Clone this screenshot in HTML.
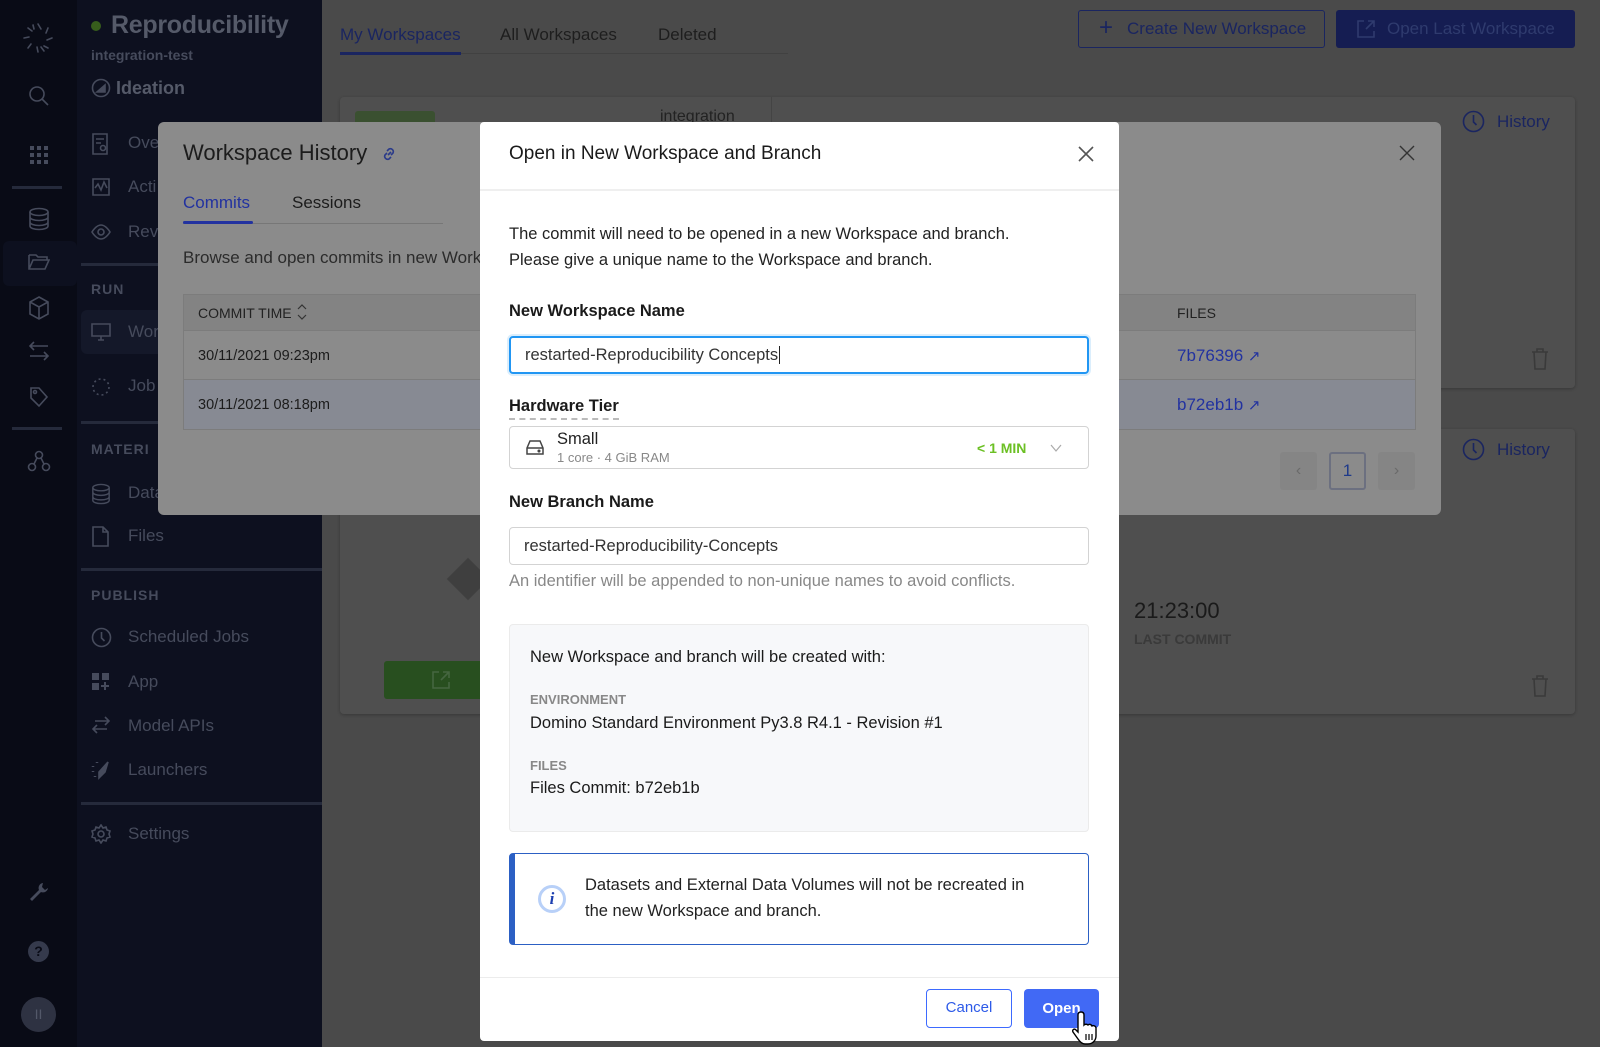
<!DOCTYPE html>
<html><head><meta charset="utf-8"><style>
*{box-sizing:border-box;margin:0;padding:0}
body{width:1600px;height:1047px;overflow:hidden;background:#4a4a4a;font-family:"Liberation Sans",Arial,sans-serif;position:relative;color:#222}
.a{position:absolute;white-space:nowrap}
.rail{position:absolute;left:0;top:0;width:77px;height:1047px;background:#090b16}
.side{position:absolute;left:77px;top:0;width:245px;height:1047px;background:#0d101f}
.si{color:#464b5c;font-size:17px}
.sh{color:#464b5c;font-size:14px;font-weight:bold;letter-spacing:1px}
.div{position:absolute;height:3px;background:#252a3b}
.ic{position:absolute;stroke:#464b5c;fill:none;stroke-width:1.6}
.card{position:absolute;background:#4f4f4f;border-radius:4px;box-shadow:0 1px 3px rgba(0,0,0,.25)}
.hist{position:absolute;left:158px;top:122px;width:1283px;height:393px;background:#8b8b8b;border-radius:6px}
.m{position:absolute;left:480px;top:122px;width:639px;height:919px;background:#fff;border-radius:4px}
.lbl{font-size:16.5px;font-weight:bold;color:#1a1a1a}
.inp{position:absolute;left:29px;width:580px;height:38px;border:1px solid #d3d3d3;border-radius:4px;font-size:16.5px;padding:0 14px;line-height:36px;color:#333}
</style></head><body>

<div class="rail"></div>
<svg class="ic" style="left:20px;top:20px" width="36" height="36" viewBox="0 0 36 36" stroke-width="2.2" stroke="#6c7180"><g stroke-linecap="round"><path d="M18 4l3 5"/><path d="M28 8l-2 5"/><path d="M32 18l-5 2"/><path d="M28 28l-4-2"/><path d="M18 32l-1-5"/><path d="M8 28l3-4"/><path d="M4 18l5-1"/><path d="M8 8l4 3"/><path d="M13 5l1 4"/><path d="M24 31l-3-4"/></g></svg>
<svg class="ic" style="left:27px;top:84px" width="24" height="24" viewBox="0 0 24 24" stroke-width="2.2"><circle cx="10" cy="10" r="7"/><path d="M15 15l6 6"/></svg>
<svg class="ic" style="left:30px;top:146px;fill:#464b5c;stroke:none" width="18" height="18" viewBox="0 0 18 18"><g><rect x="0" y="0" width="4" height="4"/><rect x="7" y="0" width="4" height="4"/><rect x="14" y="0" width="4" height="4"/><rect x="0" y="7" width="4" height="4"/><rect x="7" y="7" width="4" height="4"/><rect x="14" y="7" width="4" height="4"/><rect x="0" y="14" width="4" height="4"/><rect x="7" y="14" width="4" height="4"/><rect x="14" y="14" width="4" height="4"/></g></svg>
<div class="div" style="left:12px;top:186px;width:50px"></div>
<svg class="ic" style="left:28px;top:207px" width="22" height="24" viewBox="0 0 22 24"><ellipse cx="11" cy="5" rx="9" ry="3.5"/><path d="M2 5v14c0 2 4 3.5 9 3.5s9-1.5 9-3.5V5M2 10c0 2 4 3.5 9 3.5s9-1.5 9-3.5M2 15c0 2 4 3.5 9 3.5s9-1.5 9-3.5"/></svg>
<div class="a" style="left:3px;top:241px;width:74px;height:45px;background:#0d101f;border-radius:6px"></div>
<svg class="ic" style="left:28px;top:253px" width="22" height="18" viewBox="0 0 22 18"><path d="M1 2h7l2 2h9v3M1 2v14h16l4-9H5L1 16"/></svg>
<svg class="ic" style="left:28px;top:296px" width="22" height="24" viewBox="0 0 22 24"><path d="M11 1l9 5v12l-9 5-9-5V6zM2 6l9 5 9-5M11 11v12"/></svg>
<svg class="ic" style="left:28px;top:340px" width="22" height="22" viewBox="0 0 22 22"><path d="M6 2L2 6l4 4M2 6h18M16 12l4 4-4 4M20 16H2"/></svg>
<svg class="ic" style="left:29px;top:386px" width="20" height="22" viewBox="0 0 20 22"><path d="M2 2h8l8 9-8 9-8-8z"/><circle cx="6" cy="6" r="1.5"/></svg>
<div class="div" style="left:12px;top:427px;width:50px"></div>
<svg class="ic" style="left:27px;top:449px" width="24" height="24" viewBox="0 0 24 24"><circle cx="12" cy="6" r="3.5"/><circle cx="5" cy="18" r="3.5"/><circle cx="19" cy="18" r="3.5"/><path d="M10 9l-3 6M14 9l3 6"/></svg>
<svg class="ic" style="left:29px;top:882px;fill:#464b5c;stroke:none" width="20" height="20" viewBox="0 0 20 20"><path d="M14 1a5 5 0 0 0-4 7L1 17l2 2 9-9a5 5 0 0 0 7-4l-3 2-3-3z"/></svg>
<div class="a" style="left:28px;top:941px;width:21px;height:21px;border-radius:50%;background:#353a4c;color:#090b16;font-size:14px;font-weight:bold;text-align:center;line-height:21px">?</div>
<div class="a" style="left:21px;top:997px;width:35px;height:35px;border-radius:50%;background:#2e3242;color:#535869;font-size:14px;text-align:center;line-height:35px">II</div>

<div class="side"></div>
<div class="a" style="left:91px;top:21px;width:10px;height:10px;border-radius:50%;background:#375e1c"></div>
<div class="a" style="left:111px;top:11px;font-size:25px;font-weight:bold;color:#555a69;letter-spacing:-.3px">Reproducibility</div>
<div class="a" style="left:91px;top:47px;font-size:14px;font-weight:bold;color:#464b5c">integration-test</div>
<svg class="ic" style="left:91px;top:78px" width="20" height="20" viewBox="0 0 20 20"><circle cx="10" cy="10" r="8.5"/><path d="M6 14h8V7z" fill="#464b5c"/></svg>
<div class="a" style="left:116px;top:78px;font-size:18px;font-weight:bold;color:#555a69">Ideation</div>
<svg class="ic" style="left:92px;top:133px" width="18" height="22" viewBox="0 0 18 22"><path d="M1 1h14v20H1zM4 6h8M4 10h5"/><circle cx="11" cy="15" r="2.5"/></svg>
<div class="a si" style="left:128px;top:133px">Ove</div>
<svg class="ic" style="left:92px;top:178px" width="18" height="18" viewBox="0 0 18 18"><path d="M1 1h16v16H1zM3 10l3-4 3 6 3-8 3 6"/></svg>
<div class="a si" style="left:128px;top:177px">Acti</div>
<svg class="ic" style="left:91px;top:224px" width="20" height="16" viewBox="0 0 20 16"><path d="M1 8s4-7 9-7 9 7 9 7-4 7-9 7-9-7-9-7z"/><circle cx="10" cy="8" r="3"/></svg>
<div class="a si" style="left:128px;top:222px">Rev</div>
<div class="div" style="left:81px;top:263px;width:241px"></div>
<div class="a sh" style="left:91px;top:281px">RUN</div>
<div class="a" style="left:81px;top:310px;width:241px;height:44px;background:#141829;border-radius:6px"></div>
<svg class="ic" style="left:91px;top:323px" width="20" height="18" viewBox="0 0 20 18"><path d="M1 1h18v12H1zM7 17h6M10 13v4"/></svg>
<div class="a si" style="left:128px;top:322px">Wor</div>
<svg class="ic" style="left:91px;top:377px;stroke-dasharray:2 3" width="20" height="20" viewBox="0 0 20 20"><circle cx="10" cy="10" r="8"/></svg>
<div class="a si" style="left:128px;top:376px">Job</div>
<div class="div" style="left:81px;top:421px;width:241px"></div>
<div class="a sh" style="left:91px;top:441px">MATERI</div>
<svg class="ic" style="left:91px;top:483px" width="20" height="22" viewBox="0 0 22 24"><ellipse cx="11" cy="5" rx="9" ry="3.5"/><path d="M2 5v14c0 2 4 3.5 9 3.5s9-1.5 9-3.5V5M2 10c0 2 4 3.5 9 3.5s9-1.5 9-3.5M2 15c0 2 4 3.5 9 3.5s9-1.5 9-3.5"/></svg>
<div class="a si" style="left:128px;top:483px">Data</div>
<svg class="ic" style="left:92px;top:526px" width="17" height="21" viewBox="0 0 17 21"><path d="M1 1h10l5 5v14H1zM11 1v5h5"/></svg>
<div class="a si" style="left:128px;top:526px">Files</div>
<div class="div" style="left:81px;top:568px;width:241px"></div>
<div class="a sh" style="left:91px;top:587px">PUBLISH</div>
<svg class="ic" style="left:91px;top:627px" width="21" height="21" viewBox="0 0 21 21"><circle cx="10.5" cy="10.5" r="9"/><path d="M10.5 5v6l3 3"/></svg>
<div class="a si" style="left:128px;top:627px">Scheduled Jobs</div>
<svg class="ic" style="left:92px;top:673px;fill:#464b5c;stroke:none" width="18" height="18" viewBox="0 0 18 18"><rect x="0" y="0" width="7" height="7"/><rect x="10" y="0" width="7" height="7"/><rect x="0" y="10" width="7" height="7"/><path d="M13 9v8M9 13h8" stroke="#464b5c" stroke-width="2"/></svg>
<div class="a si" style="left:128px;top:672px">App</div>
<svg class="ic" style="left:92px;top:716px" width="18" height="18" viewBox="0 0 18 18"><path d="M13 1l4 4-4 4M17 5H3M5 9l-4 4 4 4M1 13h14"/></svg>
<div class="a si" style="left:128px;top:716px">Model APIs</div>
<svg class="ic" style="left:91px;top:760px" width="20" height="20" viewBox="0 0 20 20"><path d="M8 12l9-10-3 10-6 6z" fill="#464b5c"/><path d="M2 6v1M2 11v1M4 16v1M6 2v1" stroke-width="2.5"/></svg>
<div class="a si" style="left:128px;top:760px">Launchers</div>
<div class="div" style="left:81px;top:802px;width:241px"></div>
<svg class="ic" style="left:91px;top:824px" width="20" height="20" viewBox="0 0 20 20"><circle cx="10" cy="10" r="3"/><path d="M10 1l2 3 3-1 1 3 3 1-1 3 1 3-3 1-1 3-3-1-2 3-2-3-3 1-1-3-3-1 1-3-1-3 3-1 1-3 3 1z"/></svg>
<div class="a si" style="left:128px;top:824px">Settings</div>

<div class="a" style="left:340px;top:25px;font-size:17px;color:#1a2560">My Workspaces</div>
<div class="a" style="left:500px;top:25px;font-size:17px;color:#1e1e1e">All Workspaces</div>
<div class="a" style="left:658px;top:25px;font-size:17px;color:#1e1e1e">Deleted</div>
<div class="a" style="left:340px;top:53px;width:448px;height:1px;background:#414141"></div>
<div class="a" style="left:340px;top:52px;width:121px;height:3px;background:#1a2560"></div>
<div class="a" style="left:1078px;top:10px;width:247px;height:38px;border:1.5px solid #1a2560;border-radius:3px;color:#1a2560;font-size:17px;line-height:35px;padding-left:48px">Create New Workspace<span class="a" style="left:20px;top:-1px;font-size:24px">+</span></div>
<div class="a" style="left:1336px;top:10px;width:239px;height:38px;background:#151d52;border-radius:3px;color:#2f3b6e;font-size:17px;line-height:38px;padding-left:51px">Open Last Workspace</div>
<svg class="ic" style="left:1356px;top:19px;stroke:#2f3b6e" width="20" height="20" viewBox="0 0 20 20"><path d="M8 2H2v16h16v-6M12 2h6v6M18 2l-8 8"/></svg>

<div class="card" style="left:340px;top:97px;width:1235px;height:291px"></div>
<div class="a" style="left:355px;top:111px;width:80px;height:24px;background:#3a5030;border-radius:3px"></div>
<div class="a" style="left:771px;top:97px;width:1px;height:40px;background:#444"></div>
<div class="a" style="left:660px;top:108px;font-size:16px;color:#222">integration</div>
<div class="a" style="left:1497px;top:112px;font-size:17px;color:#1a2560">History</div>
<svg class="ic" style="left:1462px;top:110px;stroke:#1a2560" width="23" height="23" viewBox="0 0 23 23"><circle cx="11.5" cy="11.5" r="10"/><path d="M11.5 5v7l3 3"/></svg>
<svg class="ic" style="left:1531px;top:348px;stroke:#3a3a3a" width="18" height="22" viewBox="0 0 18 22"><path d="M1 4h16M6 4V1h6v3M3 4l1 17h10l1-17"/></svg>

<div class="card" style="left:340px;top:429px;width:1235px;height:285px"></div>
<div class="a" style="left:1497px;top:440px;font-size:17px;color:#1a2560">History</div>
<svg class="ic" style="left:1462px;top:438px;stroke:#1a2560" width="23" height="23" viewBox="0 0 23 23"><circle cx="11.5" cy="11.5" r="10"/><path d="M11.5 5v7l3 3"/></svg>
<div class="a" style="left:384px;top:661px;width:110px;height:38px;background:#284f1f;border-radius:3px"></div>
<svg class="ic" style="left:431px;top:670px;stroke:#456640" width="20" height="20" viewBox="0 0 20 20"><path d="M8 2H2v16h16v-6M12 2h6v6M18 2l-8 8"/></svg>
<div class="a" style="left:453px;top:564px;width:30px;height:30px;background:#3f3f3f;transform:rotate(45deg)"></div>
<div class="a" style="left:1134px;top:598px;font-size:22px;color:#1a1a1a">21:23:00</div>
<div class="a" style="left:1134px;top:631px;font-size:14px;font-weight:bold;color:#3a3a3a">LAST COMMIT</div>
<svg class="ic" style="left:1531px;top:675px;stroke:#3a3a3a" width="18" height="22" viewBox="0 0 18 22"><path d="M1 4h16M6 4V1h6v3M3 4l1 17h10l1-17"/></svg>

<div class="hist">
  <div class="a" style="left:25px;top:18px;font-size:22px;color:#1c1c1c">Workspace History</div>
  <svg class="a" style="left:223px;top:24px" width="16" height="16" viewBox="0 0 16 16" fill="none" stroke="#2a3a8a" stroke-width="1.6"><path d="M7 9l3-3M6 5l2-2a3 3 0 0 1 4 4l-2 2M10 11l-2 2a3 3 0 0 1-4-4l2-2"/></svg>
  <div class="a" style="left:25px;top:71px;font-size:17px;color:#2232a0">Commits</div>
  <div class="a" style="left:134px;top:71px;font-size:17px;color:#1c1c1c">Sessions</div>
  <div class="a" style="left:25px;top:101px;width:260px;height:1px;background:#777"></div>
  <div class="a" style="left:25px;top:99px;width:70px;height:3px;background:#2232a0;border-radius:2px"></div>
  <div class="a" style="left:25px;top:126px;font-size:17px;color:#2b2b2b">Browse and open commits in new Workspaces</div>
  <div class="a" style="left:25px;top:172px;width:1233px;height:37px;background:#838383;border:1px solid #7c7c7c"></div>
  <div class="a" style="left:40px;top:183px;font-size:14px;color:#222">COMMIT TIME</div>
  <svg class="a" style="left:139px;top:181px" width="10" height="18" viewBox="0 0 10 18" fill="none" stroke="#333" stroke-width="1.2"><path d="M1 6l4-4 4 4M1 12l4 4 4-4"/></svg>
  <div class="a" style="left:1019px;top:183px;font-size:14px;color:#222">FILES</div>
  <div class="a" style="left:25px;top:209px;width:1233px;height:49px;background:#8b8b8b;border:1px solid #7c7c7c;border-top:none"></div>
  <div class="a" style="left:25px;top:258px;width:1233px;height:50px;background:#878a93;border:1px solid #7c7c7c;border-top:none"></div>
  <div class="a" style="left:40px;top:226px;font-size:14.5px;color:#1c1c1c">30/11/2021 09:23pm</div>
  <div class="a" style="left:40px;top:275px;font-size:14.5px;color:#1c1c1c">30/11/2021 08:18pm</div>
  <div class="a" style="left:1019px;top:224px;font-size:17px;color:#2232a0">7b76396 <span style="font-size:15px">&#x2197;</span></div>
  <div class="a" style="left:1019px;top:273px;font-size:17px;color:#2232a0">b72eb1b <span style="font-size:15px">&#x2197;</span></div>
  <div class="a" style="left:1122px;top:330px;width:37px;height:38px;background:#858585;border-radius:3px;color:#6a6a6a;text-align:center;line-height:38px">&#x2039;</div>
  <div class="a" style="left:1171px;top:330px;width:37px;height:38px;border:2px solid #6c7080;border-radius:3px;color:#1f3a8a;text-align:center;line-height:34px;font-size:17px">1</div>
  <div class="a" style="left:1220px;top:330px;width:37px;height:38px;background:#858585;border-radius:3px;color:#6a6a6a;text-align:center;line-height:38px">&#x203A;</div>
  <svg class="a" style="left:1241px;top:23px" width="16" height="16" viewBox="0 0 16 16" stroke="#333" stroke-width="1.4"><path d="M1 1l14 14M15 1L1 15"/></svg>
</div>

<div class="m">
  <div class="a" style="left:29px;top:21px;font-size:19px;color:#1a1a1a">Open in New Workspace and Branch</div>
  <svg class="a" style="left:598px;top:24px" width="16" height="16" viewBox="0 0 16 16" stroke="#555" stroke-width="1.6"><path d="M1 1l14 14M15 1L1 15"/></svg>
  <div class="a" style="left:0;top:67px;width:639px;height:2px;background:#efefef"></div>
  <div class="a" style="left:29px;top:100px;font-size:16.5px;line-height:25.5px;color:#222">The commit will need to be opened in a new Workspace and branch.<br>Please give a unique name to the Workspace and branch.</div>
  <div class="a lbl" style="left:29px;top:180px">New Workspace Name</div>
  <div class="inp" style="top:214px;border:2px solid #2196f3;line-height:34px;box-shadow:0 0 0 2px #dbeefc">restarted-Reproducibility Concepts<span style="border-left:1px solid #222;margin-left:1px"></span></div>
  <div class="a lbl" style="left:29px;top:275px;border-bottom:2px dashed #bbb;padding-bottom:2px">Hardware Tier</div>
  <div class="a" style="left:29px;top:304px;width:580px;height:43px;border:1px solid #d3d3d3;border-radius:4px"></div>
  <svg class="a" style="left:46px;top:318px" width="18" height="15" viewBox="0 0 18 15" fill="none" stroke="#444" stroke-width="1.5"><path d="M4 1h10l3 7v6H1V8zM1 8h16"/><circle cx="13" cy="11" r=".8" fill="#444"/></svg>
  <div class="a" style="left:77px;top:308px;font-size:16.5px;color:#222">Small</div>
  <div class="a" style="left:77px;top:328px;font-size:13px;color:#888">1 core · 4 GiB RAM</div>
  <div class="a" style="left:497px;top:318px;font-size:14px;font-weight:bold;color:#6cc024">&lt; 1 MIN</div>
  <svg class="a" style="left:570px;top:322px" width="12" height="8" viewBox="0 0 12 8" fill="none" stroke="#aaa" stroke-width="1.2"><path d="M1 1l5 6 5-6"/></svg>
  <div class="a lbl" style="left:29px;top:371px">New Branch Name</div>
  <div class="inp" style="top:405px">restarted-Reproducibility-Concepts</div>
  <div class="a" style="left:29px;top:450px;font-size:16.5px;color:#888">An identifier will be appended to non-unique names to avoid conflicts.</div>
  <div class="a" style="left:29px;top:502px;width:580px;height:208px;background:#f7f8fa;border:1px solid #ebebeb;border-radius:4px"></div>
  <div class="a" style="left:50px;top:526px;font-size:16.5px;color:#1a1a1a">New Workspace and branch will be created with:</div>
  <div class="a" style="left:50px;top:570px;font-size:13px;font-weight:bold;color:#888">ENVIRONMENT</div>
  <div class="a" style="left:50px;top:592px;font-size:16.5px;color:#1a1a1a">Domino Standard Environment Py3.8 R4.1 - Revision #1</div>
  <div class="a" style="left:50px;top:636px;font-size:13px;font-weight:bold;color:#888">FILES</div>
  <div class="a" style="left:50px;top:657px;font-size:16.5px;color:#1a1a1a">Files Commit: b72eb1b</div>
  <div class="a" style="left:29px;top:731px;width:580px;height:92px;border:1px solid #2c60c4;border-left:6px solid #2c60c4;border-radius:4px"></div>
  <div class="a" style="left:58px;top:763px;width:28px;height:28px;border-radius:50%;border:3px solid #b8d0f8;color:#1d3fb0;font-family:'Liberation Serif',serif;font-style:italic;font-weight:bold;font-size:17px;text-align:center;line-height:22px">i</div>
  <div class="a" style="left:105px;top:751px;font-size:16.5px;line-height:25.5px;color:#222">Datasets and External Data Volumes will not be recreated in<br>the new Workspace and branch.</div>
  <div class="a" style="left:0;top:855px;width:639px;height:1px;background:#ececec"></div>
  <div class="a" style="left:446px;top:867px;width:86px;height:39px;border:1.5px solid #3d6aff;border-radius:4px;color:#2d5ae8;font-size:15px;text-align:center;line-height:36px">Cancel</div>
  <div class="a" style="left:544px;top:867px;width:75px;height:39px;background:#4169f5;border-radius:4px;color:#fff;font-size:15px;font-weight:bold;text-align:center;line-height:39px">Open</div>
  <svg class="a" style="left:592px;top:888px" width="30" height="36" viewBox="0 0 30 36"><path d="M9 2c2 0 3 1 3 3v10c1-1 3-1 4 0 1-1 3-1 4 1 1-1 4 0 4 2v8c0 4-3 8-8 8h-3c-3 0-5-2-7-5l-5-7c-1-2 1-4 3-2l2 2V5c0-2 1-3 3-3z" fill="#fff" stroke="#000" stroke-width="1.4"/><path d="M14 24v6M17 24v6M20 24v6" stroke="#000" stroke-width="1.2"/></svg>
</div>
</body></html>
